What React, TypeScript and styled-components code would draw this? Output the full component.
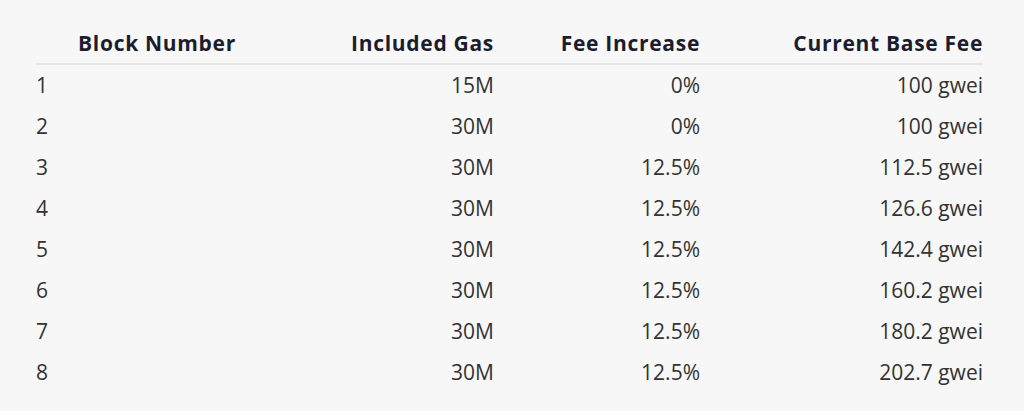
import React from "react";
import styled, { createGlobalStyle } from "styled-components";

const Global = createGlobalStyle`
  html, body {
    margin: 0;
    padding: 0;
    background: #f7f7f7;
  }
  body {
    font-family: "Open Sans", "Noto Sans", sans-serif;
  }
`;

const Page = styled.div`
  padding: 23px 41px 0 36px;
`;

const Table = styled.table`
  width: 947px;
  border-collapse: collapse;
  table-layout: fixed;
  font-size: 21px;
  line-height: 41px;
`;

const HeadCell = styled.th<{ $align: "center" | "right" }>`
  padding: 0;
  font-weight: 700;
  letter-spacing: 0.7px;
  color: #1b1d2e;
  text-align: ${(p) => p.$align};
  border-bottom: 2px solid #e6e6e6;
  white-space: nowrap;
  line-height: 40px;
`;

const Cell = styled.td<{ $align: "left" | "right" }>`
  padding: 0;
  color: #333333;
  text-align: ${(p) => p.$align};
  white-space: nowrap;
`;

const columns: { title: string; width: number; head: "center" | "right"; body: "left" | "right" }[] = [
  { title: "Block Number", width: 242, head: "center", body: "left" },
  { title: "Included Gas", width: 216, head: "right", body: "right" },
  { title: "Fee Increase", width: 206, head: "right", body: "right" },
  { title: "Current Base Fee", width: 283, head: "right", body: "right" },
];

const rows = [
  ["1", "15M", "0%", "100 gwei"],
  ["2", "30M", "0%", "100 gwei"],
  ["3", "30M", "12.5%", "112.5 gwei"],
  ["4", "30M", "12.5%", "126.6 gwei"],
  ["5", "30M", "12.5%", "142.4 gwei"],
  ["6", "30M", "12.5%", "160.2 gwei"],
  ["7", "30M", "12.5%", "180.2 gwei"],
  ["8", "30M", "12.5%", "202.7 gwei"],
];

export default function App() {
  return (
    <>
      <Global />
      <Page>
        <Table>
          <colgroup>
            {columns.map((c) => (
              <col key={c.title} style={{ width: c.width }} />
            ))}
          </colgroup>
          <thead>
            <tr>
              {columns.map((c) => (
                <HeadCell key={c.title} $align={c.head}>
                  {c.title}
                </HeadCell>
              ))}
            </tr>
          </thead>
          <tbody>
            {rows.map((r) => (
              <tr key={r[0]}>
                {r.map((v, i) => (
                  <Cell key={i} $align={columns[i].body}>
                    {v}
                  </Cell>
                ))}
              </tr>
            ))}
          </tbody>
        </Table>
      </Page>
    </>
  );
}
